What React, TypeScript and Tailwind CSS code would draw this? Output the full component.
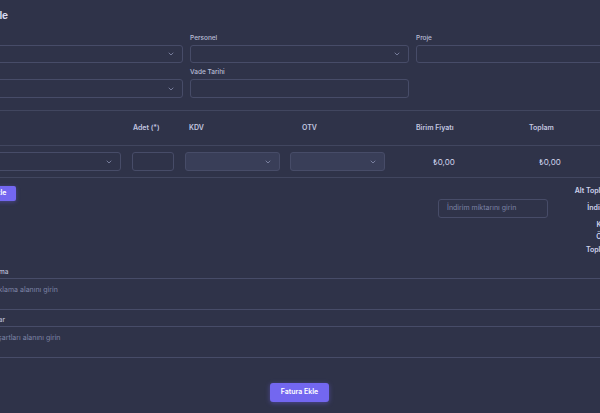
import React from "react";
import { ChevronDown } from "lucide-react";

const Label = ({ children }: { children?: React.ReactNode }) => (
  <div className="h-[8px] mb-[3px] text-[6.5px] leading-[8px] font-medium text-[#b9bdd6]">
    {children}
  </div>
);

const Select = ({ filled = false, h = "h-[18px]" }: { filled?: boolean; h?: string }) => (
  <div
    className={`${h} w-full rounded-[3px] border border-[#474c68] flex items-center justify-end pr-[7px] ${
      filled ? "bg-[#393e58]" : ""
    }`}
  >
    <ChevronDown size={8} strokeWidth={2} className="text-[#9aa0c2]" />
  </div>
);

const Box = ({ h = "h-[19px]" }: { h?: string }) => (
  <div className={`${h} w-full rounded-[3px] border border-[#474c68]`} />
);

const App = () => {
  return (
    <div className="w-[600px] h-[413px] overflow-hidden bg-[#2f3349] font-['Inter',sans-serif] text-[#cfd3ec]">
      <div className="-ml-[36px] w-[671px]">
        {/* heading */}
        <h1 className="pt-[9px] h-[21px] -ml-[10px] text-[10px] leading-[12px] font-bold text-[#d7daf0]">
          Fatura Ekle
        </h1>

        {/* form fields */}
        <div className="mt-[13px] grid grid-cols-3 gap-x-[7px]">
          <div>
            <Label>Müşteri</Label>
            <Select />
          </div>
          <div>
            <Label>Personel</Label>
            <Select />
          </div>
          <div>
            <Label>Proje</Label>
            <Box h="h-[18px]" />
          </div>
        </div>
        <div className="mt-[5px] grid grid-cols-3 gap-x-[7px]">
          <div>
            <Label>Tarih</Label>
            <Select h="h-[19px]" />
          </div>
          <div>
            <Label>Vade Tarihi</Label>
            <Box />
          </div>
          <div />
        </div>

        {/* items table */}
        <div className="mt-[12px] border-t border-[#41465f]">
          <div className="flex h-[35px] items-center border-b border-[#41465f] text-[7px] font-semibold text-[#c3c7e0]">
            <div className="w-[162px]">Ürün</div>
            <div className="w-[54px] pl-[7px]">Adet (*)</div>
            <div className="w-[105px] pl-[9px]">KDV</div>
            <div className="w-[105px] pl-[17px]">OTV</div>
            <div className="w-[110px] pl-[26px]">Birim Fiyatı</div>
            <div className="w-[100px] pl-[29px]">Toplam</div>
          </div>
          <div className="flex h-[32px] items-center border-b border-[#41465f] text-[8px] text-[#cfd3ec]">
            <div className="w-[162px] pr-[5px]">
              <Select h="h-[19px]" />
            </div>
            <div className="w-[54px] px-[6px]">
              <Box />
            </div>
            <div className="w-[105px] px-[5px]">
              <Select filled h="h-[19px]" />
            </div>
            <div className="w-[105px] px-[5px]">
              <Select filled h="h-[19px]" />
            </div>
            <div className="w-[110px] pl-[43px]">₺0,00</div>
            <div className="w-[100px] pl-[39px]">₺0,00</div>
          </div>
        </div>

        {/* add row + summary */}
        <div className="flex items-start justify-between">
          <button className="mt-[8px] h-[15px] px-[10px] rounded-[2px] bg-[#7367f0] text-[7px] font-semibold text-white shadow-[0_1px_4px_rgba(115,103,240,0.4)]">
            Ürün Ekle
          </button>
          <div className="mt-[6px] grid grid-cols-[110px_65px_22px] text-[7px] font-semibold text-[#cfd3ec]">
            <div className="h-[15px]" />
            <div className="h-[15px] flex items-center justify-end">Alt Toplam:</div>
            <div className="h-[15px]" />
            <div className="h-[19px] rounded-[3px] border border-[#474c68] flex items-center pl-[8px] text-[7px] font-normal text-[#7d83a6]">
              İndirim miktarını girin
            </div>
            <div className="h-[19px] flex items-center justify-end">İndirim:</div>
            <div />
            <div className="h-[14px]" />
            <div className="h-[14px] flex items-center justify-end">KDV:</div>
            <div />
            <div className="h-[11px]" />
            <div className="h-[11px] flex items-center justify-end">ÖTV:</div>
            <div />
            <div className="h-[15px]" />
            <div className="h-[15px] flex items-center justify-end">Toplam:</div>
            <div />
          </div>
        </div>

        {/* notes */}
        <div className="mt-[10px] mx-[16px]">
          <Label>Açıklama</Label>
          <div className="-mt-[1px] h-[32px] border-y border-[#474c68] px-[8px] pt-[6px] text-[7px] text-[#7d83a6]">
            Açıklama alanını girin
          </div>
          <div className="mt-[6px]">
            <Label>Koşullar</Label>
          </div>
          <div className="-mt-[1px] h-[32px] border-y border-[#474c68] px-[8px] pt-[6px] text-[7px] text-[#7d83a6]">
            Ek şartları alanını girin
          </div>
        </div>

        <div className="mt-[25px] flex justify-center">
          <button className="h-[19px] w-[59px] rounded-[3px] bg-[#7367f0] text-[7px] font-semibold text-white shadow-[0_1px_5px_rgba(115,103,240,0.45)]">
            Fatura Ekle
          </button>
        </div>
      </div>
    </div>
  );
};

export default App;
